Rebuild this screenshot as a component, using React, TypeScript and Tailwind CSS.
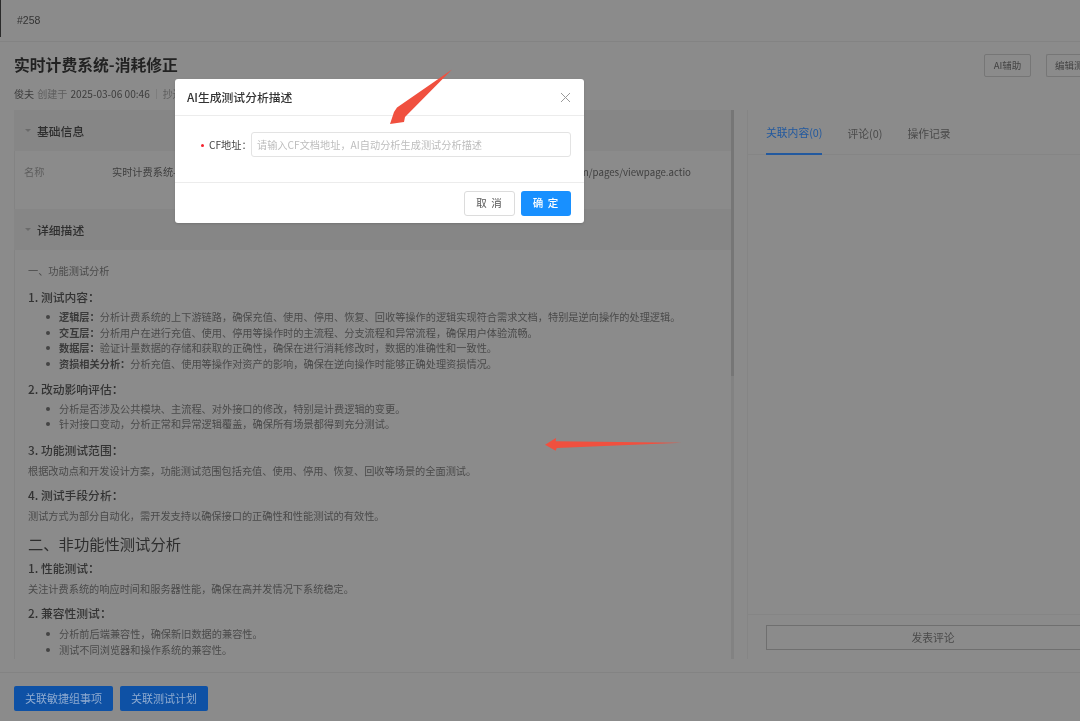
const font = { fontFamily: '"Noto Sans CJK SC", "Liberation Sans", sans-serif' };

function SectionHeader({ title }: { title: string }) {
  return (
    <div className="flex h-[41px] shrink-0 items-center bg-[#868686] pl-[11px]">
      <span className="h-0 w-0 border-x-[3px] border-t-[3px] border-x-transparent border-t-[#6a6a6a]" />
      <span className="ml-[6px] text-[11.8px] font-medium text-[#2e2e2e]">{title}</span>
    </div>
  );
}

function Sub({ children, className = "" }: { children: string; className?: string }) {
  return <div className={`text-[11.8px] font-medium leading-[18px] text-[#333] ${className}`}>{children}</div>;
}

function Para({ children, className = "" }: { children: string; className?: string }) {
  return <p className={`text-[10.2px] leading-[16px] text-[#4a4a4a] ${className}`}>{children}</p>;
}

function Li({ label, children }: { label?: string; children: string }) {
  return (
    <li className="flex h-[15.7px] items-center text-[10.2px] leading-[16px] text-[#4a4a4a]">
      <span className="ml-[18px] mr-[9px] h-[4px] w-[4px] shrink-0 rounded-full bg-[#444]" />
      <span className="whitespace-nowrap">
        {label && <b className="font-semibold text-[#3a3a3a]">{label}</b>}
        {children}
      </span>
    </li>
  );
}

function Details() {
  return (
    <div className="min-h-0 flex-1 overflow-hidden border-l border-[#838383] pl-[13px] pt-[13px]">
      <Para>一、功能测试分析</Para>
      <Sub className="mt-[9px]">1. 测试内容：</Sub>
      <ul className="mt-[3px]">
        <Li label="逻辑层：">分析计费系统的上下游链路，确保充值、使用、停用、恢复、回收等操作的逻辑实现符合需求文档，特别是逆向操作的处理逻辑。</Li>
        <Li label="交互层：">分析用户在进行充值、使用、停用等操作时的主流程、分支流程和异常流程，确保用户体验流畅。</Li>
        <Li label="数据层：">验证计量数据的存储和获取的正确性，确保在进行消耗修改时，数据的准确性和一致性。</Li>
        <Li label="资损相关分析：">分析充值、使用等操作对资产的影响，确保在逆向操作时能够正确处理资损情况。</Li>
      </ul>
      <Sub className="mt-[8px]">2. 改动影响评估：</Sub>
      <ul className="mt-[3px]">
        <Li>分析是否涉及公共模块、主流程、对外接口的修改，特别是计费逻辑的变更。</Li>
        <Li>针对接口变动，分析正常和异常逻辑覆盖，确保所有场景都得到充分测试。</Li>
      </ul>
      <Sub className="mt-[9px]">3. 功能测试范围：</Sub>
      <Para className="mt-[4px]">根据改动点和开发设计方案，功能测试范围包括充值、使用、停用、恢复、回收等场景的全面测试。</Para>
      <Sub className="mt-[7px]">4. 测试手段分析：</Sub>
      <Para className="mt-[4px]">测试方式为部分自动化，需开发支持以确保接口的正确性和性能测试的有效性。</Para>
      <h2 className="mt-[7px] text-[15.3px] leading-[24px] text-[#2e2e2e]">二、非功能性测试分析</h2>
      <Sub className="mt-[4px]">1. 性能测试：</Sub>
      <Para className="mt-[4px]">关注计费系统的响应时间和服务器性能，确保在高并发情况下系统稳定。</Para>
      <Sub className="mt-[7px]">2. 兼容性测试：</Sub>
      <ul className="mt-[4px]">
        <Li>分析前后端兼容性，确保新旧数据的兼容性。</Li>
        <Li>测试不同浏览器和操作系统的兼容性。</Li>
      </ul>
    </div>
  );
}

function Modal() {
  return (
    <div className="absolute left-[175px] top-[79px] w-[409px] rounded-[3px] bg-white shadow-sm">
      <div className="flex h-[37px] items-center justify-between border-b border-[#ececec] pl-[12px] pr-[13px]">
        <span className="text-[11.8px] font-medium text-[#333]">AI生成测试分析描述</span>
        <svg width="11" height="11" viewBox="0 0 11 11" className="text-[#9a9a9a]">
          <path d="M1 1l9 9M10 1l-9 9" stroke="currentColor" strokeWidth="1" fill="none" />
        </svg>
      </div>
      <div className="flex h-[67px] items-start border-b border-[#ececec] pl-[26px] pt-[16px]">
        <div className="flex h-[25px] w-[50px] items-center whitespace-nowrap text-[10.2px] text-[#444]">
          <span className="mr-[5px] mt-[1px] h-[3px] w-[3px] shrink-0 rounded-full bg-[#f5222d]" />
          CF地址：
        </div>
        <div className="flex h-[25px] w-[320px] items-center rounded-[3px] border border-[#e3e3e3] px-[5px] text-[10.2px] text-[#bdbdbd]">
          请输入CF文档地址，AI自动分析生成测试分析描述
        </div>
      </div>
      <div className="flex h-[40px] items-center justify-end gap-[6px] pr-[13px]">
        <button className="h-[25px] w-[51px] rounded-[3px] border border-[#dcdcdc] bg-white text-[10.5px] tracking-[1px] text-[#555]">取 消</button>
        <button className="h-[25px] w-[50px] rounded-[3px] bg-[#1890ff] text-[10.5px] font-medium tracking-[1px] text-white">确 定</button>
      </div>
    </div>
  );
}

export default function App() {
  return (
    <div className="relative flex h-[721px] w-[1080px] flex-col overflow-hidden bg-[#8b8b8b] blur-[0.35px]" style={font}>
      {/* header */}
      <div className="flex h-[42px] shrink-0 items-center border-b border-[#838383]">
        <div className="mb-[5px] h-[37px] w-[1px] bg-[#2a2a2a]" />
        <span className="ml-[16px] text-[10.5px] font-medium text-[#333]" style={{ fontFamily: '"Liberation Sans", sans-serif' }}>#258</span>
      </div>

      {/* title */}
      <div className="flex h-[68px] shrink-0 justify-between pl-[14px]">
        <div>
          <h1 className="mt-[12px] text-[15.8px] font-semibold leading-[22px] text-[#222]">实时计费系统-消耗修正</h1>
          <div className="mt-[11px] flex items-center text-[10.1px] leading-[14px] text-[#3d3d3d]">
            <span>俊夫</span>
            <span className="ml-[3px] text-[#5e5e5e]">创建于</span>
            <span className="ml-[3px]">2025-03-06 00:46</span>
            <span className="mx-[6px] h-[10px] w-px bg-[#7d7d7d]" />
            <span className="text-[#5e5e5e]">抄送</span>
          </div>
        </div>
        <div className="mt-[12px] flex h-[23px] gap-[15px]">
          <div className="flex w-[47px] items-center justify-center rounded-[2px] border border-[#767676] text-[9.5px] text-[#444]">AI辅助</div>
          <div className="w-[34px] overflow-hidden whitespace-nowrap rounded-l-[2px] border border-r-0 border-[#767676] pl-[8px] text-[9.5px] leading-[21px] text-[#444]">编辑测试</div>
        </div>
      </div>

      {/* panels */}
      <div className="flex h-[549px] shrink-0 pl-[14px]">
        <div className="flex w-[717px] shrink-0 flex-col">
          <SectionHeader title="基础信息" />
          <div className="flex h-[58px] shrink-0 justify-between border-l border-[#838383] pl-[9px] pt-[13px] text-[10.2px] leading-[16px] text-[#3f3f3f]">
            <span className="w-[88px] text-[#5e5e5e]">名称</span>
            <span className="flex-1">实时计费系统-消耗修正</span>
            <span className="pr-[40px] text-[9.7px]">m/pages/viewpage.actio</span>
          </div>
          <SectionHeader title="详细描述" />
          <Details />
        </div>
        {/* scrollbar */}
        <div className="w-[3px] shrink-0 bg-[#828282]">
          <div className="h-[266px] bg-[#767676]" />
        </div>
        <div className="ml-[13px] flex w-[353px] shrink-0 flex-col border-l border-[#858585]">
          <div className="flex h-[45px] shrink-0 gap-[25px] border-b border-[#858585] pl-[18px] text-[10.8px] leading-[16px] text-[#4a4a4a]">
            <span className="flex h-[45px] items-center border-b-2 border-[#22599f] text-[#22599f]">关联内容(0)</span>
            <span className="flex h-[45px] items-center">评论(0)</span>
            <span className="flex h-[45px] items-center">操作记录</span>
          </div>
          <div className="flex-1" />
          <div className="h-[45px] shrink-0 border-t border-[#858585] pl-[18px] pt-[10px]">
            <div className="flex h-[25px] items-center justify-center border border-[#6f6f6f] text-[10.8px] text-[#4a4a4a]">发表评论</div>
          </div>
        </div>
      </div>

      {/* footer */}
      <div className="mt-[13px] flex flex-1 gap-[7px] border-t border-[#838383] pl-[14px] pt-[13px]">
        <button className="h-[25px] w-[99px] rounded-[2px] bg-[#0e51a5] text-[11px] text-[#8fabd0]">关联敏捷组事项</button>
        <button className="h-[25px] w-[88px] rounded-[2px] bg-[#0e51a5] text-[11px] text-[#8fabd0]">关联测试计划</button>
      </div>

      <Modal />

      {/* annotation arrows */}
      <svg className="absolute left-[385px] top-[65px]" width="72" height="62" viewBox="0 0 72 62">
        <path d="M67 4.5 L12 42.5 L9 47 L5 59 L19 57 L20 52 Z" fill="#f0503f" />
      </svg>
      <svg className="absolute left-[543px] top-[436px]" width="142" height="16" viewBox="0 0 142 16">
        <path d="M2 8.7 L13 2 L12.7 5.3 L138.7 6.7 L13.7 12 L12.7 14.7 Z" fill="#f0503f" />
      </svg>
    </div>
  );
}
